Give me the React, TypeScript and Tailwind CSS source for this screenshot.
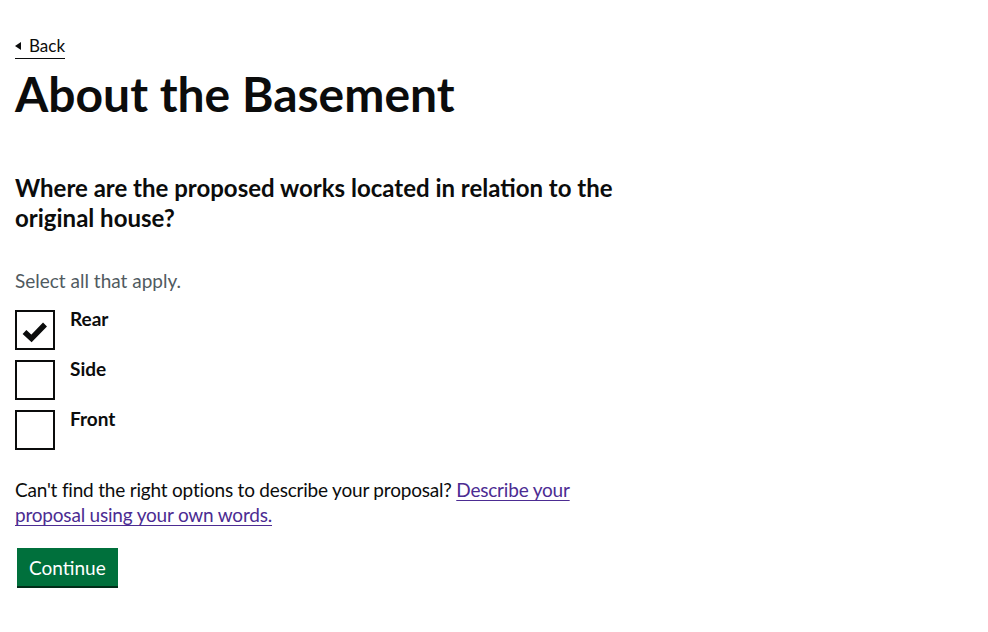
import React, { useState } from 'react';

const options = ['Rear', 'Side', 'Front'];

const App: React.FC = () => {
  const [checked, setChecked] = useState<string[]>(['Rear']);

  const toggle = (opt: string) => {
    setChecked((prev) =>
      prev.includes(opt) ? prev.filter((o) => o !== opt) : [...prev, opt]
    );
  };

  return (
    <div
      className="min-h-screen bg-white text-[#0b0c0c] px-[15px] pt-[32px]"
      style={{ fontFamily: 'Lato, Arial, sans-serif' }}
    >
      <a
        href="#"
        className="inline-flex items-center gap-[8px] text-[17px] leading-[20px] text-[#0b0c0c] border-b border-[#0b0c0c] pb-[2px]"
      >
        <span className="w-0 h-0 border-y-[4px] border-y-transparent border-r-[6px] border-r-[#0b0c0c]" />
        <span>Back</span>
      </a>

      <h1 className="mt-[9px] text-[48px] leading-[52px] font-bold">
        About the Basement
      </h1>

      <div className="w-[620px]">
        <h2 className="mt-[53px] text-[24px] leading-[30px] font-bold">
          Where are the proposed works located in relation to the original house?
        </h2>

        <p className="mt-[35px] text-[19px] leading-[25px] text-[#505a5f]">
          Select all that apply.
        </p>

        <div className="mt-[17px] flex flex-col gap-[10px]">
          {options.map((opt) => (
            <label key={opt} className="flex items-start gap-[15px] cursor-pointer">
              <button
                type="button"
                onClick={() => toggle(opt)}
                className="w-[40px] h-[40px] border-2 border-[#0b0c0c] bg-white flex items-center justify-center shrink-0"
              >
                {checked.includes(opt) && (
                  <svg width="26" height="22" viewBox="0 0 26 22" className="mt-[3px]">
                    <path
                      d="M2.5 11 L9.5 17.5 L23 3.5"
                      fill="none"
                      stroke="#0b0c0c"
                      strokeWidth="5.5"
                    />
                  </svg>
                )}
              </button>
              <span className="-mt-[4px] text-[19px] leading-[25px] font-bold">{opt}</span>
            </label>
          ))}
        </div>

        <p className="mt-[27px] text-[19px] leading-[25px] tracking-[-0.2px]">
          Can't find the right options to describe your proposal?{' '}
          <a href="#" className="text-[#4c2c92] underline underline-offset-[3px] decoration-1">
            Describe your proposal using your own words.
          </a>
        </p>

        <button
          type="button"
          className="mt-[21px] ml-[2px] bg-[#00703c] text-white text-[19px] leading-[25px] px-[12px] pt-[7px] pb-[6px] shadow-[0_2px_0_#002d18]"
        >
          Continue
        </button>
      </div>
    </div>
  );
};

export default App;
